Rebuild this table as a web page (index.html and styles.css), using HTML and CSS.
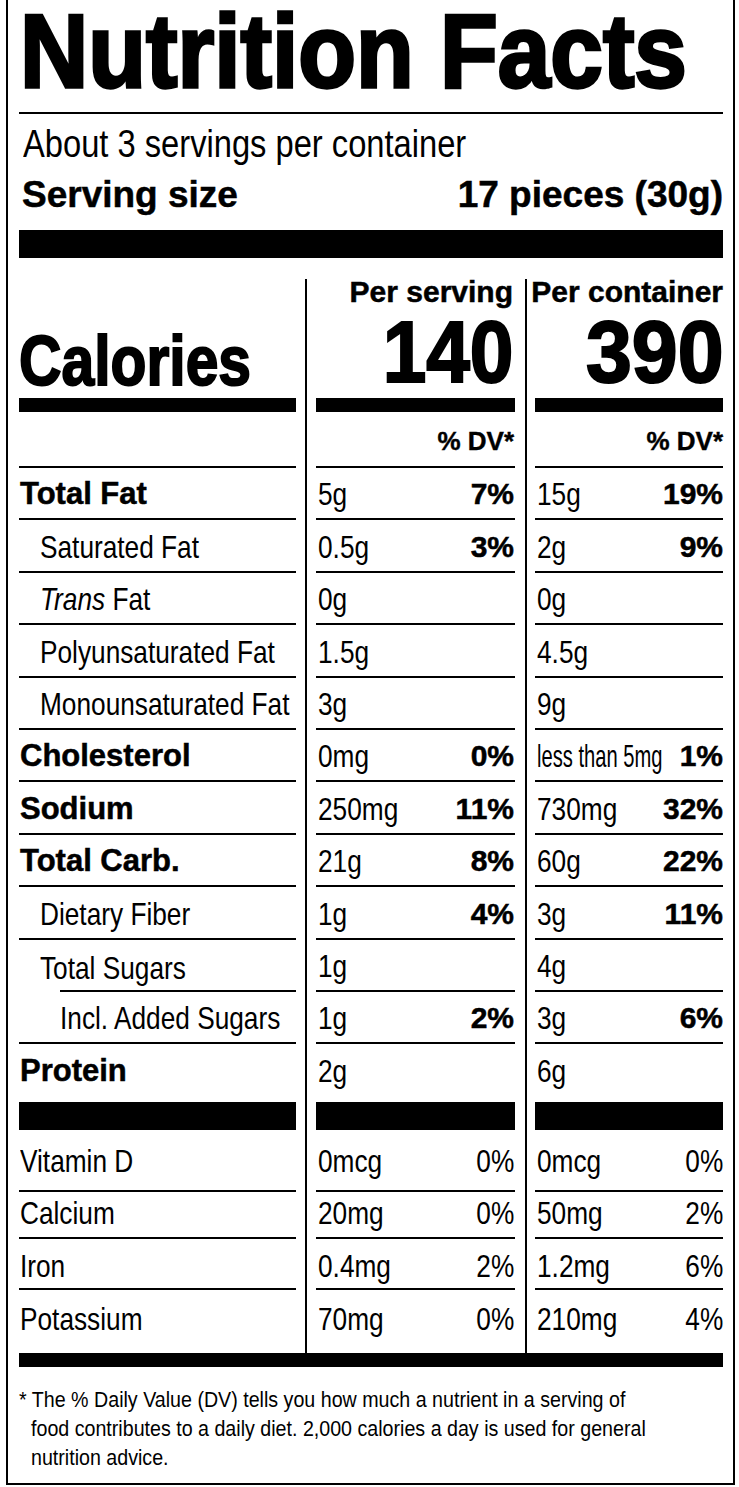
FILE: index.html
```html
<!DOCTYPE html>
<html lang="en">
<head>
<meta charset="utf-8">
<title>Nutrition Facts</title>
<link rel="stylesheet" href="styles.css">
</head>
<body>
<div class="label">
  <h1 class="title"><span>Nutrition Facts</span></h1>
  <div class="rule-thin"></div>
  <p class="servings"><span>About 3 servings per container</span></p>
  <div class="serving-size"><span>Serving size</span><span>17 pieces (30g)</span></div>
  <div class="rule-heavy"></div>

  <div class="table">
    <div class="row head">
      <div class="cell cal-label"><span class="cal">Calories</span></div>
      <div class="cell cal-val mid"><div class="per">Per serving</div><div class="kcal">140</div></div>
      <div class="cell cal-val"><div class="per">Per container</div><div class="kcal wide">390</div></div>
    </div>
    <div class="row dv">
      <div class="cell"></div>
      <div class="cell dvh mid">% DV*</div>
      <div class="cell dvh">% DV*</div>
    </div>

    <div class="row">
      <div class="cell name strong"><span>Total Fat</span></div>
      <div class="cell mid"><span>5g</span><b>7%</b></div>
      <div class="cell"><span>15g</span><b>19%</b></div>
    </div>
    <div class="row">
      <div class="cell name i1"><span>Saturated Fat</span></div>
      <div class="cell mid"><span>0.5g</span><b>3%</b></div>
      <div class="cell"><span>2g</span><b>9%</b></div>
    </div>
    <div class="row">
      <div class="cell name i1"><span><i>Trans</i> Fat</span></div>
      <div class="cell mid"><span>0g</span></div>
      <div class="cell"><span>0g</span></div>
    </div>
    <div class="row">
      <div class="cell name i1"><span>Polyunsaturated Fat</span></div>
      <div class="cell mid"><span>1.5g</span></div>
      <div class="cell"><span>4.5g</span></div>
    </div>
    <div class="row">
      <div class="cell name i1"><span>Monounsaturated Fat</span></div>
      <div class="cell mid"><span>3g</span></div>
      <div class="cell"><span>9g</span></div>
    </div>
    <div class="row">
      <div class="cell name strong"><span>Cholesterol</span></div>
      <div class="cell mid"><span>0mg</span><b>0%</b></div>
      <div class="cell"><span class="squeeze">less than 5mg</span><b>1%</b></div>
    </div>
    <div class="row">
      <div class="cell name strong"><span>Sodium</span></div>
      <div class="cell mid"><span>250mg</span><b>11%</b></div>
      <div class="cell"><span>730mg</span><b>32%</b></div>
    </div>
    <div class="row">
      <div class="cell name strong"><span>Total Carb.</span></div>
      <div class="cell mid"><span>21g</span><b>8%</b></div>
      <div class="cell"><span>60g</span><b>22%</b></div>
    </div>
    <div class="row">
      <div class="cell name i1"><span>Dietary Fiber</span></div>
      <div class="cell mid"><span>1g</span><b>4%</b></div>
      <div class="cell"><span>3g</span><b>11%</b></div>
    </div>
    <div class="row">
      <div class="cell name i1 short-rule"><span>Total Sugars</span></div>
      <div class="cell mid"><span>1g</span></div>
      <div class="cell"><span>4g</span></div>
    </div>
    <div class="row">
      <div class="cell name i2"><span>Incl. Added Sugars</span></div>
      <div class="cell mid"><span>1g</span><b>2%</b></div>
      <div class="cell"><span>3g</span><b>6%</b></div>
    </div>
    <div class="row protein">
      <div class="cell name strong"><span>Protein</span></div>
      <div class="cell mid"><span>2g</span></div>
      <div class="cell"><span>6g</span></div>
    </div>
    <div class="row bar">
      <div class="cell"></div>
      <div class="cell"></div>
      <div class="cell"></div>
    </div>

    <div class="row vit vit-d">
      <div class="cell name"><span>Vitamin D</span></div>
      <div class="cell mid"><span>0mcg</span><span class="pct">0%</span></div>
      <div class="cell"><span>0mcg</span><span class="pct">0%</span></div>
    </div>
    <div class="row vit vit-ca">
      <div class="cell name"><span>Calcium</span></div>
      <div class="cell mid"><span>20mg</span><span class="pct">0%</span></div>
      <div class="cell"><span>50mg</span><span class="pct">2%</span></div>
    </div>
    <div class="row vit vit-fe">
      <div class="cell name"><span>Iron</span></div>
      <div class="cell mid"><span>0.4mg</span><span class="pct">2%</span></div>
      <div class="cell"><span>1.2mg</span><span class="pct">6%</span></div>
    </div>
    <div class="row vit vit-k">
      <div class="cell name"><span>Potassium</span></div>
      <div class="cell mid"><span>70mg</span><span class="pct">0%</span></div>
      <div class="cell"><span>210mg</span><span class="pct">4%</span></div>
    </div>
  </div>

  <div class="rule-bottom"></div>
  <p class="foot"><span>* The % Daily Value (DV) tells you how much a nutrient in a serving of<br>food contributes to a daily diet. 2,000 calories a day is used for general<br>nutrition advice.</span></p>
</div>
</body>
</html>
```

FILE: styles.css
```css
:root {
  --sans: "Liberation Sans", Arial, Helvetica, sans-serif;
}

* { box-sizing: border-box; }

html, body {
  margin: 0;
  background: #fff;
  color: #000;
}

.label {
  margin-left: 6px;
  width: 729px;
  border: 2px solid #000;
  border-top: 0;
  padding: 0 10px 11.5px 11px;
  font-family: var(--sans);
}

/* ---------- header ---------- */
.title {
  margin: 0;
  padding-left: 1px;
  font: 700 95px/108px var(--sans);
  white-space: nowrap;
}
.title > span {
  display: inline-block;
  transform: scale(0.995, 1.1);
  transform-origin: 0 86.9px;
  -webkit-text-stroke: 3px #000;
}

.rule-thin {
  height: 2px;
  margin-top: 4px;
  background: #000;
}

.servings {
  margin: 10.8px 0 0;
  padding-left: 4px;
  font: 400 38px/38px var(--sans);
  white-space: nowrap;
}
.servings > span {
  display: inline-block;
  transform: scaleX(0.86);
  transform-origin: 0 50%;
}

.serving-size {
  display: flex;
  justify-content: space-between;
  margin-top: 12.9px;
  padding-left: 3px;
  font: 700 37px/37px var(--sans);
  white-space: nowrap;
  -webkit-text-stroke: 0.5px #000;
}

.rule-heavy {
  height: 28px;
  margin-top: 17.3px;
  background: #000;
}

/* ---------- table ---------- */
.table {
  margin-top: 21px;
  background-image: linear-gradient(#000, #000), linear-gradient(#000, #000);
  background-size: 2px 100%, 2px 100%;
  background-position: 286px 0, 506px 0;
  background-repeat: no-repeat;
}

.row {
  display: grid;
  grid-template-columns: 277px 199px 188px;
  column-gap: 20px;
  height: 52.4px;
}

.cell {
  display: flex;
  justify-content: space-between;
  align-items: flex-end;
  padding: 0 0 8px 2px;
  border-bottom: 2px solid #000;
  font: 400 32px/32px var(--sans);
  white-space: nowrap;
}
.cell.mid { padding-right: 1px; }

/* condensed regular text */
.cell > span {
  display: inline-block;
  transform: scaleX(0.82);
  transform-origin: 0 50%;
}
.cell > span.pct { transform-origin: 100% 50%; }
.cell > span.squeeze { transform: scaleX(0.63); width: 126px; }

.cell b {
  font: 700 30px/32px var(--sans);
  -webkit-text-stroke: 0.5px #000;
}

.name { padding-left: 1px; }
.name.strong {
  font: 700 31px/32px var(--sans);
  -webkit-text-stroke: 0.5px #000;
}
.name.strong > span { transform: none; }
.name.i1 { padding-left: 21px; }
.name.i2 { padding-left: 41px; }

.short-rule {
  border-bottom: 0;
  background: linear-gradient(#000, #000) no-repeat 41px 100% / calc(100% - 41px) 2px;
}

/* calories block */
.row.head { height: 133px; }
.row.head .cell {
  border-bottom-width: 14px;
  padding: 0;
}
.cal-label {
  padding-bottom: 2px !important;
  font: 700 70px/70px var(--sans);
}
.cell > span.cal {
  transform: scaleX(0.84);
  -webkit-text-stroke: 2px #000;
}
.cal-val {
  flex-direction: column;
  justify-content: flex-start;
  align-items: flex-end;
}
.cal-val.mid { padding-right: 2px !important; }
.per {
  font: 700 30px/26px var(--sans);
  white-space: nowrap;
  -webkit-text-stroke: 0.5px #000;
}
.kcal {
  margin-top: 10.3px;
  font: 700 80px/80px var(--sans);
  transform: scale(0.98, 1.08);
  transform-origin: 100% 67.7px;
  -webkit-text-stroke: 2px #000;
}
.kcal.wide { transform: scale(1.03, 1.08); }

.row.dv { height: 56px; }
.dvh {
  justify-content: flex-end;
  padding-bottom: 9px;
  font: 700 26px/32px var(--sans);
  -webkit-text-stroke: 0.4px #000;
}

.row.protein { height: 57.6px; }
.row.protein .cell {
  border-bottom: 0;
  padding-bottom: 14.5px;
}

.row.bar { height: 28px; }
.row.bar .cell {
  border: 0;
  padding: 0;
  background: #000;
}

.row.vit-d { height: 62px; }
.row.vit-d .cell { padding-bottom: 13px; }
.row.vit-ca { height: 47px; }
.row.vit-ca .cell { padding-bottom: 8px; }
.row.vit-fe { height: 51px; }
.row.vit-fe .cell { padding-bottom: 6px; }
.row.vit-k { height: 63px; }
.row.vit-k .cell {
  border-bottom: 0;
  padding-bottom: 18px;
}

/* ---------- footer ---------- */
.rule-bottom {
  height: 14px;
  background: #000;
}

.foot {
  margin: 18px 0 0;
  padding-left: 12px;
  font: 400 22.5px/29px var(--sans);
  white-space: nowrap;
}
.foot > span {
  display: inline-block;
  text-indent: -13.7px;
  transform: scaleX(0.873);
  transform-origin: 0 0;
}
```
